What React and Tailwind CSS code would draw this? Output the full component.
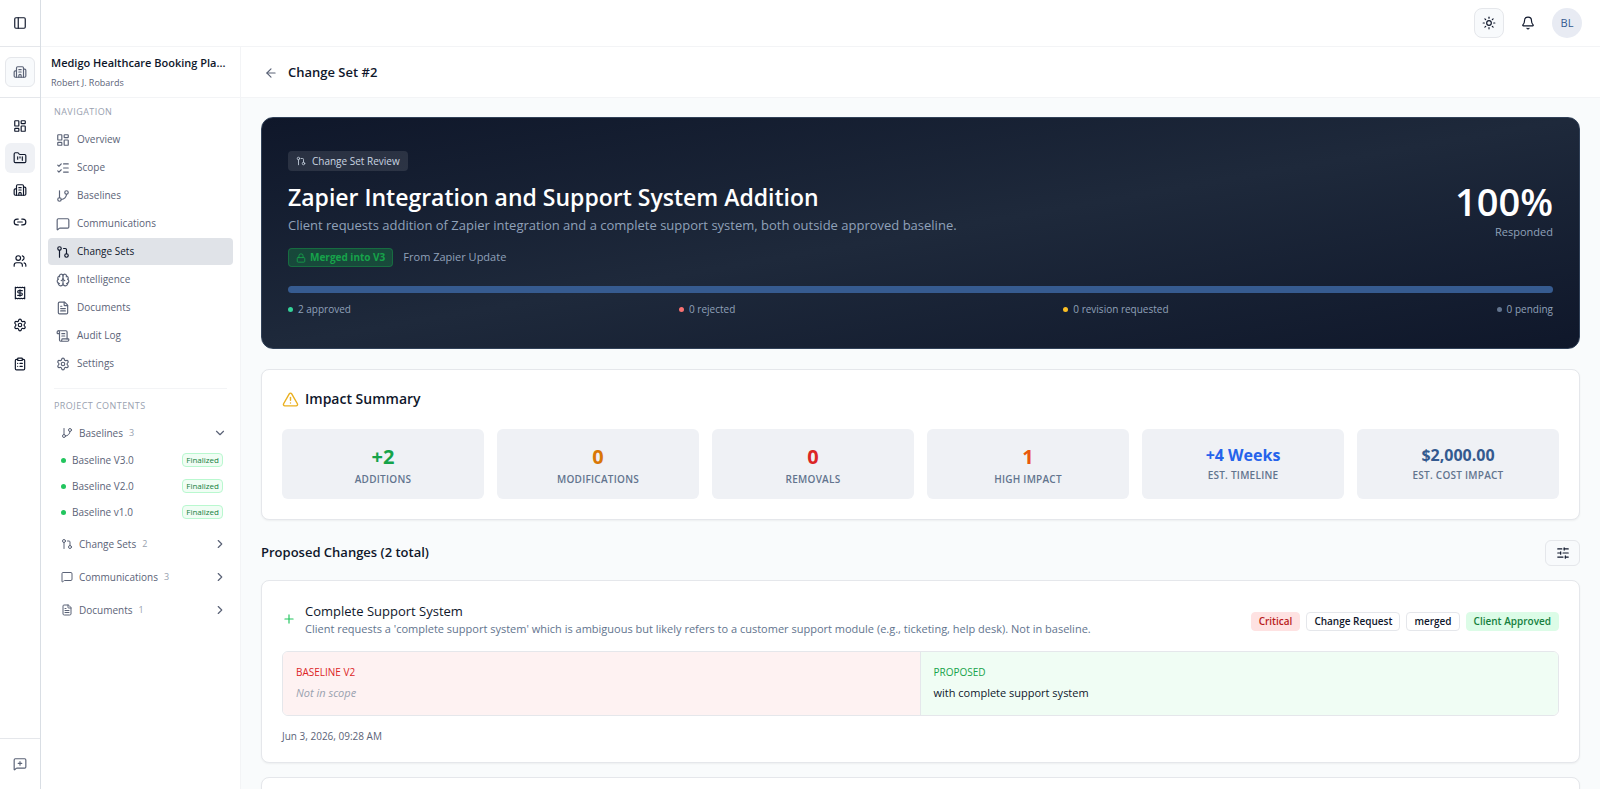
import {
  PanelLeft, Building2, LayoutDashboard, FolderKanban, Link2, Users, Receipt, Settings, ClipboardList,
  MessageSquarePlus, MessageSquare, ListChecks, GitBranch, GitPullRequest, Brain, FileText, ScrollText,
  ChevronDown, ChevronRight, ArrowLeft, Sun, Bell, Lock, TriangleAlert, Plus, SlidersHorizontal,
} from 'lucide-react';

const railGroups = [
  [
    { label: 'Dashboard', icon: LayoutDashboard },
    { label: 'Projects', icon: FolderKanban, active: true },
    { label: 'Companies', icon: Building2 },
    { label: 'Links', icon: Link2 },
  ],
  [
    { label: 'Team', icon: Users },
    { label: 'Billing', icon: Receipt },
    { label: 'Settings', icon: Settings },
  ],
  [{ label: 'Tasks', icon: ClipboardList }],
];

const navItems = [
  { label: 'Overview', icon: LayoutDashboard },
  { label: 'Scope', icon: ListChecks },
  { label: 'Baselines', icon: GitBranch },
  { label: 'Communications', icon: MessageSquare },
  { label: 'Change Sets', icon: GitPullRequest, active: true },
  { label: 'Intelligence', icon: Brain },
  { label: 'Documents', icon: FileText },
  { label: 'Audit Log', icon: ScrollText },
  { label: 'Settings', icon: Settings },
];

const baselines = ['Baseline V3.0', 'Baseline V2.0', 'Baseline v1.0'];

const contentGroups = [
  { label: 'Change Sets', count: 2, icon: GitPullRequest },
  { label: 'Communications', count: 3, icon: MessageSquare },
  { label: 'Documents', count: 1, icon: FileText },
];

const responses = [
  { label: '2 approved', dot: 'bg-[#34d399]' },
  { label: '0 rejected', dot: 'bg-[#f87171]' },
  { label: '0 revision requested', dot: 'bg-[#fbbf24]' },
  { label: '0 pending', dot: 'bg-slate-500' },
];

const impacts = [
  { value: '+2', label: 'Additions', style: 'text-xl text-[#16a34a]' },
  { value: '0', label: 'Modifications', style: 'text-xl text-[#d97706]' },
  { value: '0', label: 'Removals', style: 'text-xl text-[#dc2626]' },
  { value: '1', label: 'High Impact', style: 'text-xl text-[#ea580c]' },
  { value: '+4 Weeks', label: 'Est. Timeline', style: 'text-base leading-6 text-[#2563eb]' },
  { value: '$2,000.00', label: 'Est. Cost Impact', style: 'text-base leading-6 text-[#345a8f]' },
];

const tags = [
  { label: 'Critical', style: 'border-[#fee2e2] bg-[#fee2e2] text-[#b91c1c]' },
  { label: 'Change Request', style: 'border-gray-200 bg-white text-slate-900' },
  { label: 'merged', style: 'border-gray-200 bg-white text-slate-900' },
  { label: 'Client Approved', style: 'border-[#dcfce7] bg-[#dcfce7] text-[#15803d]' },
];

function Rail() {
  return (
    <aside className="flex w-[41px] shrink-0 flex-col border-r border-[#d9dee4] bg-white text-slate-900">
      <div className="flex h-[47px] items-center justify-center border-b border-gray-200">
        <button aria-label="Toggle sidebar"><PanelLeft className="size-3.5" /></button>
      </div>
      <div className="flex h-[51px] items-center justify-center border-b border-gray-200">
        <button aria-label="Organisation" className="flex size-[30px] items-center justify-center rounded-md border border-gray-200 bg-slate-50 text-[#5b6377]">
          <Building2 className="size-3.5" />
        </button>
      </div>
      <nav className="flex flex-col items-center gap-[9px] pt-[13px]">
        {railGroups.map((group, i) => (
          <div key={i} className="flex flex-col gap-0.5">
            {group.map(({ label, icon: Icon, active }) => (
              <a key={label} href="#" aria-label={label} className={`flex size-[30px] items-center justify-center rounded-md ${active ? 'bg-[#eff1f5]' : ''}`}>
                <Icon className="size-3.5" />
              </a>
            ))}
          </div>
        ))}
      </nav>
      <div className="mt-auto flex h-[51px] items-center justify-center border-t border-gray-200 text-[#5b6377]">
        <button aria-label="Send feedback"><MessageSquarePlus className="size-3.5" /></button>
      </div>
    </aside>
  );
}

function ProjectSidebar() {
  return (
    <aside className="flex w-[200px] shrink-0 flex-col border-r border-gray-100 bg-white text-[#5b6377]">
      <div className="flex h-[51px] flex-col justify-center border-b border-gray-100 px-2.5 pt-px">
        <h2 className="truncate text-[11px] leading-5 font-semibold text-slate-900">Medigo Healthcare Booking Pla...</h2>
        <p className="text-[9px] leading-5">Robert J. Robards</p>
      </div>
      <nav className="px-[7px] pt-1.5">
        <h3 className="px-1.5 text-[9px] leading-4 font-medium tracking-wider text-gray-400 uppercase">Navigation</h3>
        <ul className="mt-1.5">
          {navItems.map(({ label, icon: Icon, active }) => (
            <li key={label} className="pb-px">
              <a href="#" className={`flex h-[27px] items-center gap-[7px] rounded px-2 text-[10px] ${active ? 'bg-[#e0e3e8] text-slate-900' : ''}`}>
                <Icon className="size-3.5" />
                {label}
              </a>
            </li>
          ))}
        </ul>
      </nav>
      <section className="mx-[13px] mt-2.5 border-t border-gray-100 pt-[9px]">
        <h3 className="text-[9px] leading-4 font-medium tracking-wider text-gray-400 uppercase">Project Contents</h3>
        <button className="mt-[5px] flex h-7 w-full items-center gap-1.5 pl-[7px] text-[10px]">
          <GitBranch className="size-3" />
          Baselines
          <span className="text-[9px] text-gray-400">3</span>
          <ChevronDown className="ml-auto size-3.5" />
        </button>
        <ul>
          {baselines.map((name) => (
            <li key={name}>
              <a href="#" className="flex h-[26px] items-center gap-1.5 pr-1 pl-[7px] text-[10px]">
                <span className="size-[5px] rounded-full bg-[#22c55e]" />
                {name}
                <span className="ml-auto rounded-sm border border-green-200 bg-green-50 px-[3px] text-[8px] leading-3 text-[#15803d]">Finalized</span>
              </a>
            </li>
          ))}
        </ul>
        <div className="mt-[5px]">
          {contentGroups.map(({ label, count, icon: Icon }) => (
            <button key={label} className="mb-[5px] flex h-7 w-full items-center gap-1.5 pl-[7px] text-[10px]">
              <Icon className="size-3" />
              {label}
              <span className="text-[9px] text-gray-400">{count}</span>
              <ChevronRight className="ml-auto size-3.5" />
            </button>
          ))}
        </div>
      </section>
    </aside>
  );
}

function ReviewBanner() {
  return (
    <section className="rounded-xl border border-slate-700 bg-linear-to-br from-[#0f172a] via-[#1e293b] to-[#0f172a] px-[26px] pt-[33px] pb-[31px] text-slate-400">
      <div className="flex items-center justify-between">
        <div className="flex flex-col items-start">
          <span className="flex h-5 items-center gap-1.5 rounded bg-white/10 px-2 text-[10px] text-slate-300">
            <GitPullRequest className="size-2.5" />
            Change Set Review
          </span>
          <h2 className="mt-2 text-[23px] leading-9 font-semibold text-white">Zapier Integration and Support System Addition</h2>
          <p className="text-[13px] leading-5">Client requests addition of Zapier integration and a complete support system, both outside approved baseline.</p>
          <div className="mt-[13px] flex items-center gap-2.5">
            <span className="flex h-[19px] items-center gap-1 rounded border border-[#16a34a]/40 bg-[#16a34a]/30 px-[7px] text-[10px] font-bold text-[#16a34a]">
              <Lock className="size-2.5" />
              Merged into V3
            </span>
            <span className="text-[11px]">From Zapier Update</span>
          </div>
        </div>
        <div className="text-right">
          <p className="text-[38px] leading-[46px] font-semibold text-white">100%</p>
          <p className="text-[11px] leading-4">Responded</p>
        </div>
      </div>
      <div className="mt-[19px] h-[7px] rounded-full bg-[#365b90]" />
      <ul className="mt-2 flex justify-between text-[10px] leading-4">
        {responses.map(({ label, dot }) => (
          <li key={label} className="flex items-center gap-[5px]">
            <span className={`size-[5px] rounded-full ${dot}`} />
            {label}
          </li>
        ))}
      </ul>
    </section>
  );
}

function ImpactSummary() {
  return (
    <section className="mt-5 rounded-lg border border-gray-200 bg-white px-5 pt-[19px] pb-5 shadow-xs">
      <h2 className="flex items-center gap-1.5 text-sm leading-5 font-semibold text-slate-900">
        <TriangleAlert className="size-[17px] text-[#eab020]" />
        Impact Summary
      </h2>
      <dl className="mt-5 grid grid-cols-6 gap-[13px]">
        {impacts.map(({ value, label, style }) => (
          <div key={label} className="flex h-[70px] flex-col-reverse justify-end rounded-md bg-[#eff1f5] pt-3.5 text-center">
            <dt className="text-[10px] leading-4 font-semibold tracking-wide text-slate-500 uppercase">{label}</dt>
            <dd className={`font-bold ${style}`}>{value}</dd>
          </div>
        ))}
      </dl>
    </section>
  );
}

function ChangeCard() {
  return (
    <article className="mt-3.5 rounded-lg border border-gray-200 bg-white px-5 pt-5 pb-4.5 shadow-xs">
      <div className="flex items-center gap-[9px]">
        <Plus className="size-3.5 text-[#22c55e]" />
        <div>
          <h3 className="text-[13px] leading-5 text-slate-900">Complete Support System</h3>
          <p className="text-[11px] leading-4 text-slate-500">Client requests a 'complete support system' which is ambiguous but likely refers to a customer support module (e.g., ticketing, help desk). Not in baseline.</p>
        </div>
        <div className="mt-1 ml-auto flex gap-1.5">
          {tags.map(({ label, style }) => (
            <span key={label} className={`rounded border px-[7px] text-[10px] leading-[17px] font-semibold ${style}`}>{label}</span>
          ))}
        </div>
      </div>
      <div className="mt-3.5 grid h-[65px] grid-cols-2 overflow-hidden rounded-md border border-gray-200">
        <div className="border-r border-gray-200 bg-[#fef2f2] px-[13px] py-3">
          <h4 className="text-[10px] leading-4 text-[#dc2626] uppercase">Baseline V2</h4>
          <p className="mt-[5px] text-[11px] leading-4 text-gray-400 italic">Not in scope</p>
        </div>
        <div className="bg-[#f0fdf4] px-[13px] py-3">
          <h4 className="text-[10px] leading-4 text-[#16a34a] uppercase">Proposed</h4>
          <p className="mt-[5px] text-[11px] leading-4 text-slate-900">with complete support system</p>
        </div>
      </div>
      <time className="mt-3 block text-[10px] leading-4 text-[#5b6377]">Jun 3, 2026, 09:28 AM</time>
    </article>
  );
}

export default function App() {
  return (
    <div className="flex h-screen overflow-hidden bg-[#f9fbfc] font-['Open_Sans','Noto_Sans',sans-serif]">
      <Rail />
      <div className="flex min-w-0 flex-1 flex-col">
        <header className="flex h-[47px] shrink-0 items-center justify-end gap-[9px] border-b border-gray-100 bg-white px-[18px] text-slate-900">
          <button aria-label="Toggle theme" className="flex size-[30px] items-center justify-center rounded-lg border border-gray-200 bg-slate-50"><Sun className="size-3.5" /></button>
          <button aria-label="Notifications" className="flex size-[30px] items-center justify-center"><Bell className="size-3.5" /></button>
          <button className="size-[30px] rounded-full bg-[#e8ebf3] text-[11px] text-[#345a8f]">BL</button>
        </header>
        <div className="flex min-h-0 flex-1">
          <ProjectSidebar />
          <main className="flex min-w-0 flex-1 flex-col">
            <div className="flex h-[51px] shrink-0 items-center gap-2.5 border-b border-gray-100 bg-white px-[23px] pt-0.5">
              <button aria-label="Back" className="text-[#5b6377]"><ArrowLeft className="size-3.5" /></button>
              <h1 className="text-[13px] font-semibold text-slate-900">Change Set #2</h1>
            </div>
            <div className="min-h-0 flex-1 overflow-y-auto px-5 pt-[19px] [scrollbar-width:none]">
              <ReviewBanner />
              <ImpactSummary />
              <div className="mt-5 flex items-center justify-between">
                <h2 className="text-[13px] font-semibold text-slate-900">Proposed Changes (2 total)</h2>
                <button aria-label="Filter changes" className="flex h-[26px] w-[35px] items-center justify-center rounded-md border border-gray-200 bg-slate-50 text-slate-900">
                  <SlidersHorizontal className="size-3.5" />
                </button>
              </div>
              <ChangeCard />
              <article className="mt-3.5 h-[182px] rounded-lg border border-gray-200 bg-white shadow-xs" />
            </div>
          </main>
        </div>
      </div>
    </div>
  );
}
